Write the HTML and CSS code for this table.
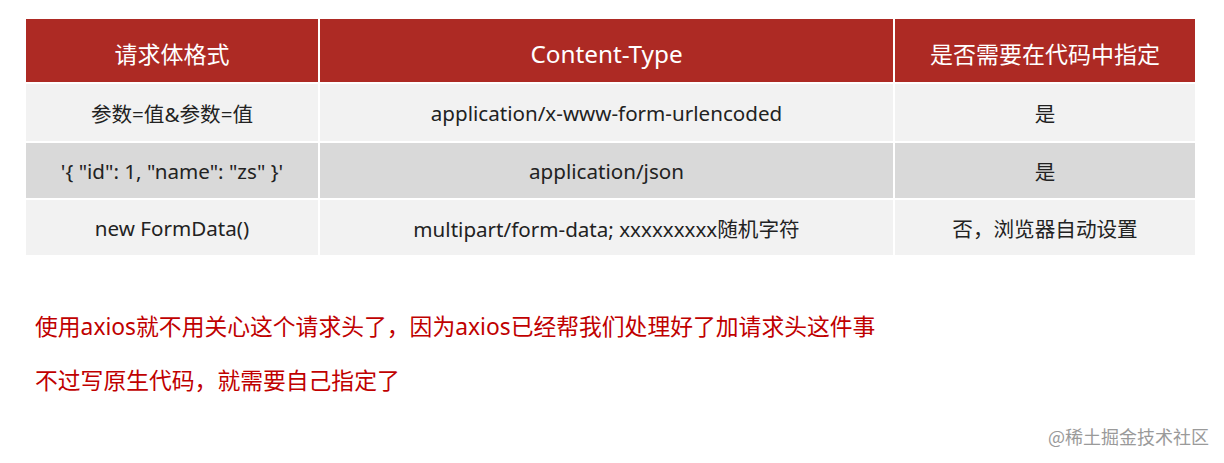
FILE: index.html
```html
<!DOCTYPE html>
<html lang="zh">
<head>
<meta charset="utf-8">
<link rel="stylesheet" href="styles.css">
</head>
<body>
<div class="page">
  <table class="ct-table">
    <colgroup>
      <col class="c1"><col class="c2"><col class="c3">
    </colgroup>
    <thead>
      <tr class="head">
        <th>请求体格式</th>
        <th><span class="latin">Content-Type</span></th>
        <th>是否需要在代码中指定</th>
      </tr>
    </thead>
    <tbody>
      <tr class="r1">
        <td>参数=值&amp;参数=值</td>
        <td>application/x-www-form-urlencoded</td>
        <td>是</td>
      </tr>
      <tr class="r2">
        <td>'{ "id": 1, "name": "zs" }'</td>
        <td>application/json</td>
        <td>是</td>
      </tr>
      <tr class="r3">
        <td>new FormData()</td>
        <td>multipart/form-data; xxxxxxxxx随机字符</td>
        <td>否，浏览器自动设置</td>
      </tr>
    </tbody>
  </table>
  <div class="notes">
    <p>使用axios就不用关心这个请求头了，因为axios已经帮我们处理好了加请求头这件事</p>
    <p>不过写原生代码，就需要自己指定了</p>
  </div>
  <div class="watermark">@稀土掘金技术社区</div>
</div>
</body>
</html>
```
FILE: styles.css
```css
html, body {
  margin: 0;
  padding: 0;
  background: #ffffff;
}
.page {
  position: relative;
  width: 1224px;
  height: 463px;
  padding: 17px 0 0 24px;
  box-sizing: border-box;
  font-family: "Noto Sans", "Noto Sans CJK SC", sans-serif;
}
.ct-table {
  border-collapse: separate;
  border-spacing: 2px;
  table-layout: fixed;
  width: 1173px;
}
.c1 { width: 292px; }
.c2 { width: 573px; }
.c3 { width: 300px; }
.ct-table th,
.ct-table td {
  padding: 0;
  text-align: center;
  vertical-align: middle;
}
.head th {
  height: 63px;
  box-sizing: border-box;
  padding-top: 5px;
  background: #ad2a24;
  color: #ffffff;
  font-size: 23px;
  font-weight: 400;
}
.head .latin {
  font-size: 24.3px;
}
.ct-table td {
  font-size: 20.6px;
  color: #222222;
}
.r1 td { height: 57px; background: #f2f2f2; }
.r2 td { height: 55px; background: #d9d9d9; }
.r3 td { height: 55px; background: #f2f2f2; }
.notes {
  padding: 53px 0 0 11px;
  color: #c00000;
  font-size: 22.8px;
}
.notes p {
  margin: 0 0 21px 0;
  line-height: 33px;
}
.watermark {
  position: absolute;
  right: 15px;
  bottom: 14px;
  font-size: 18px;
  color: #9a9a9a;
  font-family: "Noto Sans CJK SC", sans-serif;
}
```
